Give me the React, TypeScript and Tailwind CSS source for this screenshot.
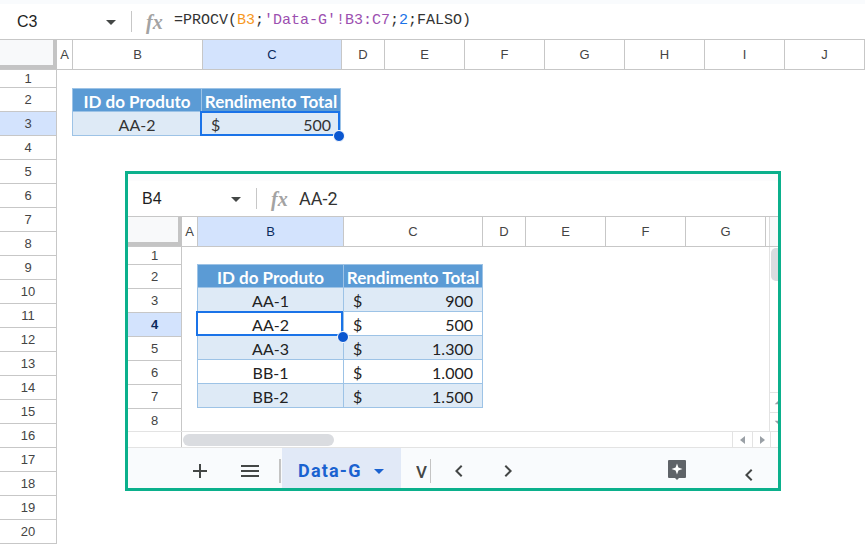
const caret = "M7 10l5 5 5-5z";
const add = "M19 13h-6v6h-2v-6H5v-2h6V5h2v6h6v2z";
const menu = "M3 18h18v-2H3v2zm0-5h18v-2H3v2zm0-7v2h18V6H3z";
const chevronLeft = "M15.41 7.41 14 6l-6 6 6 6 1.41-1.41L10.83 12z";
const chevronRight = "M8.59 16.59 10 18l6-6-6-6-1.41 1.41L13.17 12z";

function Icon({ d, className }: { d: string; className?: string }) {
  return (
    <svg viewBox="0 0 24 24" className={className ?? "size-6"} fill="currentColor">
      <path d={d} />
    </svg>
  );
}

const mainCols = [
  { label: "A", w: "w-[16px]" },
  { label: "B", w: "w-[130px]" },
  { label: "C", w: "w-[139px]", active: true },
  { label: "D", w: "w-[43px]" },
  { label: "E", w: "w-[80px]" },
  { label: "F", w: "w-[80px]" },
  { label: "G", w: "w-[80px]" },
  { label: "H", w: "w-[80px]" },
  { label: "I", w: "w-[80px]" },
  { label: "J", w: "w-[80px]" },
];

const insetCols = [
  { label: "A", w: "w-[16px]" },
  { label: "B", w: "w-[146px]", active: true },
  { label: "C", w: "w-[139px]" },
  { label: "D", w: "w-[43px]" },
  { label: "E", w: "w-[80px]" },
  { label: "F", w: "w-[80px]" },
  { label: "G", w: "w-[80px]" },
];

const products = [
  { id: "AA-1", value: "900" },
  { id: "AA-2", value: "500", selected: true },
  { id: "AA-3", value: "1.300" },
  { id: "BB-1", value: "1.000" },
  { id: "BB-2", value: "1.500" },
];

function FormulaBar({
  name,
  strip,
  nameBox,
  children,
}: {
  name: string;
  strip: string;
  nameBox: string;
  children: React.ReactNode;
}) {
  return (
    <div className="shrink-0">
      <div className={strip} />
      <div className="flex h-[35px] items-center text-[#1f1f1f]">
        <div className={`${nameBox} text-[16px]`}>{name}</div>
        <Icon d={caret} className="ml-[-3px] size-6 text-[#444746]" />
        <div className="ml-[8px] h-[21px] w-px bg-[#c7c7c7]" />
        <span className="ml-[14px] w-[21px] font-['Liberation_Serif',serif] text-[20px] font-bold text-[#a3a3a3] italic">
          fx
        </span>
        {children}
      </div>
    </div>
  );
}

function ColHeader({
  cols,
  corner,
  children,
}: {
  cols: { label: string; w: string; active?: boolean }[];
  corner: string;
  children?: React.ReactNode;
}) {
  return (
    <div className="flex h-[31px] shrink-0 border-y border-[#c7c7c7] text-[13px] text-[#444]">
      <div className={`${corner} box-border h-[29px] shrink-0 border-r-4 border-b-4 border-[#c4c4c4] bg-[#f8f9fa]`} />
      {cols.map((c) => (
        <div
          key={c.label}
          className={`${c.w} flex shrink-0 items-center justify-center border-r border-[#c7c7c7] ${
            c.active ? "bg-[#d3e3fd] text-[#0a2a5c]" : ""
          }`}
        >
          {c.label}
        </div>
      ))}
      {children}
    </div>
  );
}

function RowHeader({
  count,
  active,
  width,
  firstHeight,
  lastHeight,
  bold,
}: {
  count: number;
  active: number;
  width: string;
  firstHeight: string;
  lastHeight?: string;
  bold?: boolean;
}) {
  return (
    <div className={`${width} shrink-0 border-r border-[#c7c7c7] text-[13px] text-[#444]`}>
      {Array.from({ length: count }, (_, i) => i + 1).map((n) => (
        <div
          key={n}
          className={`flex items-center justify-center ${
            n === count && lastHeight ? "" : "border-b border-[#c7c7c7]"
          } ${n === 1 ? firstHeight : n === count && lastHeight ? lastHeight : "h-[24px]"} ${
            n === active ? "bg-[#d3e3fd]" : ""
          } ${n === active && bold ? "font-bold text-[#0a2a5c]" : ""}`}
        >
          {n}
        </div>
      ))}
    </div>
  );
}

function Cell({
  children,
  className,
  selected,
  dot,
}: {
  children: React.ReactNode;
  className?: string;
  selected?: boolean;
  dot?: string;
}) {
  return (
    <div
      className={`relative flex h-[24px] items-center border-r border-b border-[#9dc3e6] ${className ?? ""}`}
    >
      {children}
      {selected && <div className="absolute -top-px right-0 -bottom-px -left-[2px] border-2 border-[#1a73e8]" />}
      {selected && <div className={`absolute z-10 size-[12px] rounded-full border border-white bg-[#0b57d0] ${dot}`} />}
    </div>
  );
}

function HeaderCell({ children }: { children: React.ReactNode }) {
  return (
    <div className="flex h-[24px] items-center justify-center border-t border-r border-b border-[#9dc3e6] bg-[#5b9bd5] pt-[4px] text-[17px] font-bold whitespace-nowrap text-white">
      {children}
    </div>
  );
}

function Money({ value }: { value: string }) {
  return (
    <div className="flex w-full justify-between pr-[9px] pl-[9px]">
      <span>$</span>
      <span>{value}</span>
    </div>
  );
}

function Inset() {
  return (
    <div className="mt-[35px] ml-[68px] box-border flex h-[320px] w-[656px] flex-col overflow-hidden border-[3px] border-[#0bb08c] bg-white">
      <FormulaBar name="B4" strip="h-[7px] bg-[#fcfcfd]" nameBox="w-[99px] pl-[14px]">
        <span className="ml-[7px] font-['Roboto',sans-serif] text-[18px] text-[#333]">AA-2</span>
      </FormulaBar>
      <ColHeader cols={insetCols} corner="w-[54px]">
        <div className="w-[3px]" />
        <div className="flex-1 border-l border-[#dcdcdc] bg-[#f8f9fa]" />
      </ColHeader>
      <div className="flex h-[184px] shrink-0">
        <RowHeader count={8} active={4} width="w-[54px]" firstHeight="h-[18px]" lastHeight="h-[23px]" bold />
        <div className="w-[587px] shrink-0 pt-[17px] pl-[15px]">
          <div className="w-[286px] border-l border-[#9dc3e6] font-['Lato',sans-serif] text-[16px] text-[#222]">
            <div className="grid grid-cols-[146px_139px]">
              <HeaderCell>ID do Produto</HeaderCell>
              <HeaderCell>Rendimento Total</HeaderCell>
              {products.map((p, i) => (
                <div key={p.id} className="contents">
                  <Cell
                    className={`justify-center pt-[3px] ${i % 2 === 0 ? "bg-[#deeaf6]" : "bg-white"}`}
                    selected={p.selected}
                    dot="-right-[6px] -bottom-[8px]"
                  >
                    {p.id}
                  </Cell>
                  <Cell className={`pt-[3px] ${i % 2 === 0 ? "bg-[#deeaf6]" : "bg-white"}`}>
                    <Money value={p.value} />
                  </Cell>
                </div>
              ))}
            </div>
          </div>
        </div>
        <div className="flex flex-1 flex-col border-l border-[#e3e3e3]">
          <div className="mt-px ml-[1px] h-[33px] rounded-l-[5px] bg-[#dadce0]" />
          <div className="mt-auto flex h-[20px] items-center justify-center border-t border-[#e3e3e3]">
            <Icon d="M7 14l5-5 5 5z" className="size-4 text-[#9aa0a6]" />
          </div>
          <div className="flex h-[19px] items-center justify-center border-t border-[#e3e3e3]">
            <Icon d={caret} className="size-4 text-[#9aa0a6]" />
          </div>
        </div>
      </div>
      <div className="flex h-[17px] shrink-0 items-center border-y border-[#e3e3e3]">
        <div className="h-full w-[54px] border-r border-[#c7c7c7]" />
        <div className="ml-[1px] h-[12px] w-[151px] rounded-full bg-[#dadce0]" />
        <div className="ml-auto flex h-full items-center text-[#9aa0a6]">
          <div className="flex h-full w-[20px] items-center justify-center border-l border-[#e3e3e3]">
            <svg viewBox="0 0 6 8" className="h-[8px] w-[6px]" fill="currentColor"><path d="M5 0v8L0 4z" /></svg>
          </div>
          <div className="flex h-full w-[18px] items-center justify-center border-l border-[#e3e3e3]">
            <svg viewBox="0 0 6 8" className="h-[8px] w-[6px]" fill="currentColor"><path d="M1 0v8l5-4z" /></svg>
          </div>
          <div className="h-full w-[8px] border-l border-[#e3e3e3]" />
        </div>
      </div>
      <div className="flex min-h-0 flex-1 items-start bg-[#f9fbfd] text-[#444746]">
        <Icon d={add} className="mt-[11px] ml-[60px] size-6" />
        <Icon d={menu} className="mt-[11px] ml-[26px] size-6" />
        <div className="mt-[11px] ml-[17px] h-[24px] w-[2px] bg-[#c4c4c4]" />
        <div className="ml-[1px] flex h-full w-[119px] items-center bg-[#e1e9f7] pt-[5px] pl-[16px] text-[#1a62d0]">
          <span className="font-['Roboto',sans-serif] text-[18px] font-bold tracking-[1.2px]">Data-G</span>
          <Icon d={caret} className="ml-[5px] size-6" />
        </div>
        <span className="mt-[12px] ml-[15px] w-[14px] overflow-hidden font-['Roboto',sans-serif] text-[17px] font-medium">V</span>
        <div className="mt-[11px] h-[24px] w-px bg-[#c4c4c4]" />
        <Icon d={chevronLeft} className="mt-[11px] ml-[16px] size-6" />
        <Icon d={chevronRight} className="mt-[11px] ml-[25px] size-6" />
        <svg viewBox="0 0 20 22" className="mt-[11px] ml-[147px] h-[22px] w-[20px]">
          <path d="M2 1h16a1 1 0 0 1 1 1v16a1 1 0 0 1-1 1h-6l-2 2-2-2H2a1 1 0 0 1-1-1V2a1 1 0 0 1 1-1z" fill="#5f6368" />
          <path d="M10 4.5l1.4 4.1 4.1 1.4-4.1 1.4L10 15.5l-1.4-4.1L4.5 10l4.1-1.4z" fill="#fff" />
        </svg>
        <Icon d={chevronLeft} className="mt-[15px] ml-[50px] size-6" />
      </div>
    </div>
  );
}

export default function App() {
  return (
    <div className="h-[546px] w-[865px] overflow-hidden bg-white font-['Liberation_Sans',sans-serif]">
      <FormulaBar name="C3" strip="h-[4px] bg-[#f9fbfd]" nameBox="w-[102px] pl-[17px]">
        <span className="ml-[7px] font-['Liberation_Mono',monospace] text-[15px] whitespace-nowrap text-[#333]">
          =PROCV(<span className="text-[#f7981d]">B3</span>;
          <span className="text-[#9c4fb0]">'Data-G'!B3:C7</span>;<span className="text-[#1a73e8]">2</span>;FALSO)
        </span>
      </FormulaBar>
      <ColHeader cols={mainCols} corner="w-[57px]" />
      <div className="flex">
        <RowHeader count={20} active={3} width="w-[57px]" firstHeight="h-[18px]" />
        <div className="flex-1">
          <div className="mt-[18px] ml-[15px] w-[269px] border-l border-[#9dc3e6] font-['Lato',sans-serif] text-[16px] text-[#333]">
            <div className="grid grid-cols-[129px_139px]">
              <HeaderCell>ID do Produto</HeaderCell>
              <HeaderCell>Rendimento Total</HeaderCell>
              <Cell className="justify-center bg-[#deeaf6] pt-[2px]">AA-2</Cell>
              <Cell className="bg-[#deeaf6] pt-[2px]" selected dot="-right-[5px] -bottom-[7px]">
                <Money value="500" />
              </Cell>
            </div>
          </div>
          <Inset />
        </div>
      </div>
    </div>
  );
}
